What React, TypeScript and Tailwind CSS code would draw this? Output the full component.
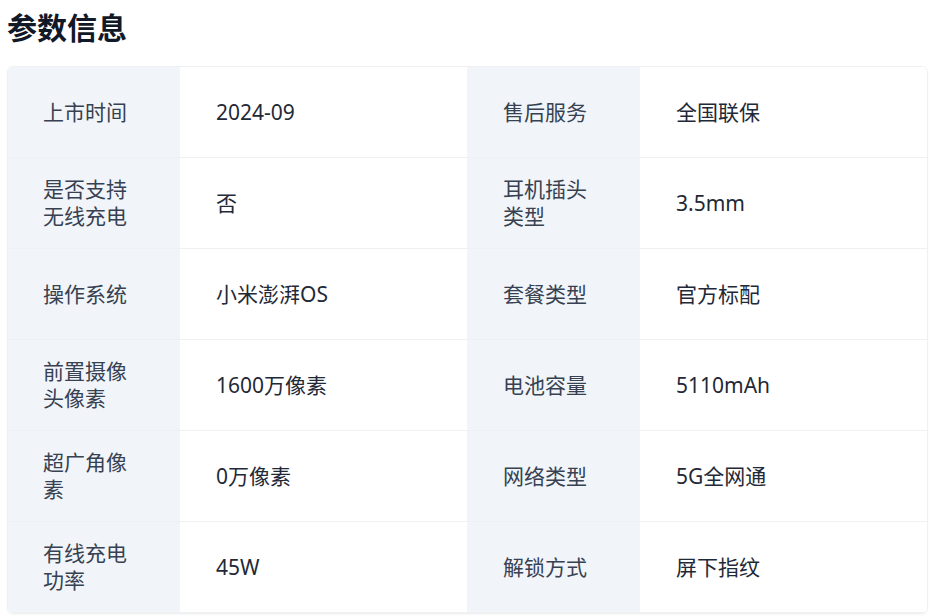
import React from 'react';

const specs: [string, string, string, string][] = [
  ['上市时间', '2024-09', '售后服务', '全国联保'],
  ['是否支持无线充电', '否', '耳机插头类型', '3.5mm'],
  ['操作系统', '小米澎湃OS', '套餐类型', '官方标配'],
  ['前置摄像头像素', '1600万像素', '电池容量', '5110mAh'],
  ['超广角像素', '0万像素', '网络类型', '5G全网通'],
  ['有线充电功率', '45W', '解锁方式', '屏下指纹'],
];

const Label: React.FC<{ text: string; first?: boolean }> = ({ text, first }) => (
  <div
    className={
      first
        ? 'flex items-center bg-[#f1f5f9] pl-[35px] pr-9 text-[21px] leading-[27px] text-[#374151]'
        : 'flex items-center bg-[#f1f5f9] pl-9 pr-9 text-[21px] leading-[27px] text-[#374151]'
    }
  >
    {text}
  </div>
);

const Value: React.FC<{ text: string }> = ({ text }) => (
  <div className="flex items-center bg-white pl-9 pr-9 text-[21px] leading-[27px] text-[#1f2937]">
    {text}
  </div>
);

const App: React.FC = () => {
  return (
    <div
      className="min-h-screen bg-white pl-[7px] pt-[8px]"
      style={{ fontFamily: '"Noto Sans", "Noto Sans CJK SC", sans-serif' }}
    >
      <h1 className="mb-[18px] text-[30px] font-bold leading-[40px] text-[#111827]">参数信息</h1>

      <div className="w-[921px] overflow-hidden rounded-md border border-[#eef0f2] shadow-[0_1px_3px_rgba(0,0,0,0.03)]">
        {specs.map((row, i) => (
          <div
            key={i}
            className="grid h-[91px] grid-cols-[172px_287px_173px_287px] border-b border-[#eef0f2]"
          >
            <Label text={row[0]} first />
            <Value text={row[1]} />
            <Label text={row[2]} />
            <Value text={row[3]} />
          </div>
        ))}
      </div>
    </div>
  );
};

export default App;
